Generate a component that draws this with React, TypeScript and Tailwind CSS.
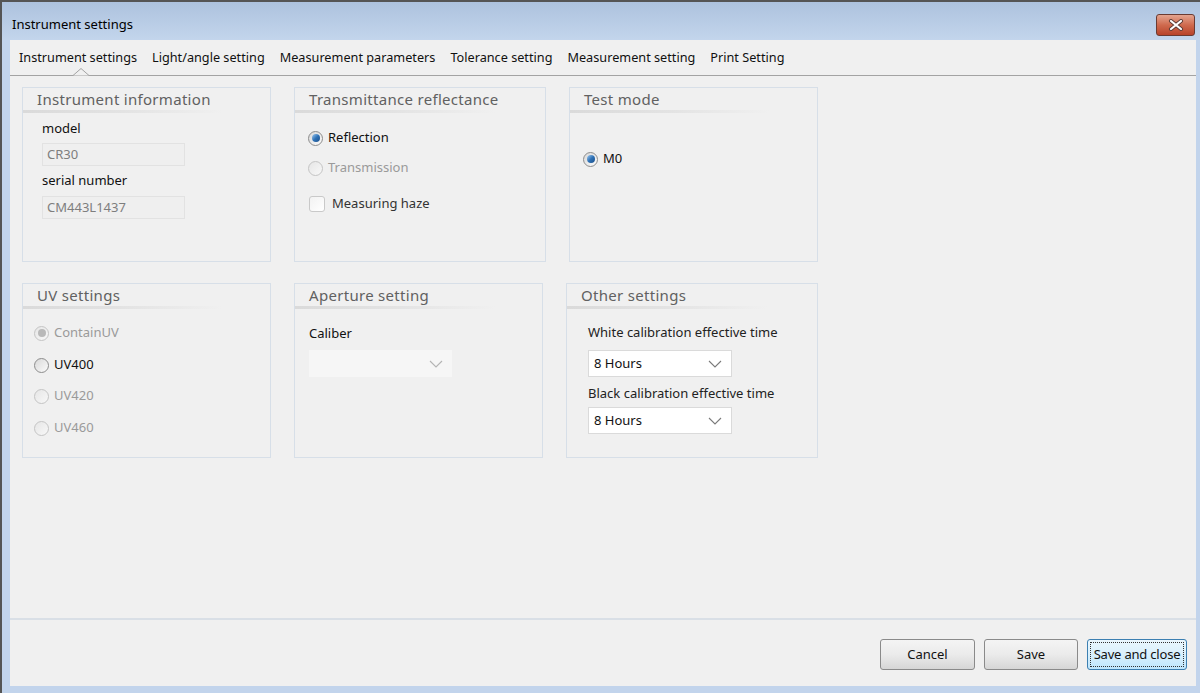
import type { ReactNode } from 'react'

const font = { fontFamily: '"Noto Sans", "Liberation Sans", sans-serif' }

function GroupBox({ title, className = '', children }: { title: string; className?: string; children?: ReactNode }) {
  return (
    <div className={`border border-[#d7dfe8] h-[175px] flex flex-col ${className}`}>
      <div className="h-[22px] flex items-center pl-[14px] text-[15px] text-[#616161] tracking-[0.3px]">{title}</div>
      <div className="h-[3px] w-[200px] bg-gradient-to-r from-[#dadada] via-[#e3e3e3] to-transparent" />
      {children}
    </div>
  )
}

function Radio({ label, checked = false, disabled = false, className = '' }: { label: string; checked?: boolean; disabled?: boolean; className?: string }) {
  return (
    <div className={`h-[20px] flex items-center gap-[5px] ${className}`}>
      <span
        className={`w-[15px] h-[15px] rounded-full border flex items-center justify-center ${
          disabled ? 'border-[#c4c4c4] bg-gradient-to-br from-[#e6e6e6] to-[#f8f8f8]' : 'border-[#8c8c8c] bg-gradient-to-br from-[#d9d9d9] to-[#fbfbfb]'
        }`}
      >
        {checked && (
          <span
            className={`w-[8px] h-[8px] rounded-full ${
              disabled ? 'bg-[#b9b9b9]' : 'bg-gradient-to-br from-[#9ccaf0] via-[#2f72b6] to-[#1b4f8a]'
            }`}
          />
        )}
      </span>
      <span className={`text-[13px] ${disabled ? 'text-[#9a9a9a]' : 'text-[#111]'}`}>{label}</span>
    </div>
  )
}

function Chevron({ color = '#8a8a8a' }: { color?: string }) {
  return (
    <svg width="14" height="8" viewBox="0 0 14 8" fill="none">
      <path d="M1 1 L7 7 L13 1" stroke={color} strokeWidth="1.1" />
    </svg>
  )
}

function Select({ value, disabled = false, className = '' }: { value?: string; disabled?: boolean; className?: string }) {
  return (
    <div
      className={`flex items-center justify-between pl-[5px] pr-[9px] text-[13px] text-[#111] ${
        disabled ? 'bg-[#f6f6f6]' : 'bg-white border border-[#dadada]'
      } ${className}`}
    >
      <span>{value}</span>
      <Chevron color={disabled ? '#b4b4b4' : '#7a7a7a'} />
    </div>
  )
}

function Button({ label, focused = false, className = '' }: { label: string; focused?: boolean; className?: string }) {
  return (
    <button
      className={`h-[31px] rounded-[3px] border text-[13px] text-[#111] ${
        focused
          ? 'border-[#3c7fb1] bg-gradient-to-b from-[#eaf6fd] via-[#d9f0fc] to-[#bee6fd] p-[2px]'
          : 'border-[#8a8a8a] bg-gradient-to-b from-[#f4f4f4] via-[#ebebeb] to-[#d6d6d6]'
      } ${className}`}
    >
      {focused ? (
        <span className="w-full h-full flex items-center justify-center border border-dotted border-[#333] whitespace-nowrap tracking-[-0.2px]">{label}</span>
      ) : (
        label
      )}
    </button>
  )
}

export default function App() {
  const tabs = ['Instrument settings', 'Light/angle setting', 'Measurement parameters', 'Tolerance setting', 'Measurement setting', 'Print Setting']

  return (
    <div style={font} className="w-[1200px] h-[693px] bg-[#c2d4ec] flex flex-col overflow-hidden border-l-2 border-t-2 border-[#555]">
      {/* TITLE BAR */}
      <div className="h-[38px] bg-gradient-to-b from-[#adc2de] to-[#c3d5ec] flex items-start justify-between pl-[10px] pr-[5px] pt-[12px] shrink-0">
        <span className="text-[13px] leading-[20px] text-black">Instrument settings</span>
        <div className="w-[39px] h-[22px] rounded-[3px] border border-[#6b3b32] bg-gradient-to-b from-[#e3a48f] via-[#cf6a4e] to-[#b8432a] flex items-center justify-center">
          <svg width="16" height="12" viewBox="0 0 16 12">
            <path d="M3 2 L13 10 M13 2 L3 10" stroke="#5a3a35" strokeWidth="4" strokeLinecap="round" />
            <path d="M3 2 L13 10 M13 2 L3 10" stroke="#fff" strokeWidth="2.2" strokeLinecap="round" />
          </svg>
        </div>
      </div>

      {/* CLIENT */}
      <div className="flex-1 ml-[8px] mr-[4px] mb-[7px] bg-[#f0f0f0] flex flex-col">
        {/* TABS */}
        <div className="h-[35px] flex items-center gap-[15px] pl-[9px] pt-[1px] text-[12.7px] text-[#111] shrink-0">
          {tabs.map(t => (
            <span key={t}>{t}</span>
          ))}
        </div>
        <div className="relative h-[1px] bg-[#a3a3a3] shrink-0">
          <svg className="absolute left-[63px] top-[-7px]" width="16" height="9" viewBox="0 0 16 9">
            <path d="M0 7.5 L8 0.5 L16 7.5" fill="#f0f0f0" stroke="#a3a3a3" strokeWidth="1" />
          </svg>
        </div>

        {/* GROUPS */}
        <div className="flex-1 pt-[11px] pl-[12px]">
          <div className="grid grid-cols-[249px_252px_249px] gap-x-[23px] gap-y-[21px]">
            <GroupBox title="Instrument information">
              <div className="pl-[19px] flex flex-col">
                <div className="h-[20px] mt-[6px] flex items-center text-[13px] text-[#111]">model</div>
                <div className="h-[23px] mt-[4px] w-[143px] border border-[#e2e2e2] bg-[#efefef] flex items-center pl-[4px] text-[13px] text-[#7e7e7e]">CR30</div>
                <div className="h-[20px] mt-[5px] flex items-center text-[13px] text-[#111]">serial number</div>
                <div className="h-[23px] mt-[5px] w-[143px] border border-[#e2e2e2] bg-[#efefef] flex items-center pl-[4px] text-[13px] text-[#7e7e7e]">CM443L1437</div>
              </div>
            </GroupBox>

            <GroupBox title="Transmittance reflectance">
              <div className="pl-[13px] flex flex-col">
                <Radio label="Reflection" checked className="mt-[15px]" />
                <Radio label="Transmission" disabled className="mt-[10px]" />
                <div className="h-[20px] mt-[16px] flex items-center gap-[7px] pl-[1px]">
                  <span className="w-[16px] h-[16px] rounded-[3px] border border-[#c9c9c9] bg-gradient-to-br from-[#f2f2f2] to-white" />
                  <span className="text-[13px] text-[#333]">Measuring haze</span>
                </div>
              </div>
            </GroupBox>

            <GroupBox title="Test mode">
              <div className="pl-[13px] flex flex-col">
                <Radio label="M0" checked className="mt-[36px]" />
              </div>
            </GroupBox>

            <GroupBox title="UV settings">
              <div className="pl-[11px] flex flex-col">
                <Radio label="ContainUV" checked disabled className="mt-[14px]" />
                <Radio label="UV400" className="mt-[12px]" />
                <Radio label="UV420" disabled className="mt-[11px]" />
                <Radio label="UV460" disabled className="mt-[12px]" />
              </div>
            </GroupBox>

            <GroupBox title="Aperture setting" className="w-[249px]">
              <div className="pl-[14px] flex flex-col">
                <div className="h-[20px] mt-[15px] flex items-center text-[13px] text-[#111]">Caliber</div>
                <Select disabled className="h-[27px] w-[143px] mt-[6px]" />
              </div>
            </GroupBox>

            <GroupBox title="Other settings" className="ml-[-3px]">
              <div className="pl-[21px] flex flex-col">
                <div className="h-[20px] mt-[14px] flex items-center text-[13px] text-[#222]">White calibration effective time</div>
                <Select value="8 Hours" className="h-[27px] w-[144px] mt-[7px]" />
                <div className="h-[20px] mt-[7px] flex items-center text-[13px] text-[#222]">Black calibration effective time</div>
                <Select value="8 Hours" className="h-[27px] w-[144px] mt-[3px]" />
              </div>
            </GroupBox>
          </div>
        </div>

        {/* FOOTER */}
        <div className="h-[68px] border-t-2 border-[#d9dfe6] flex items-start justify-end gap-[9px] pt-[19px] pr-[9px] shrink-0">
          <Button label="Cancel" className="w-[95px]" />
          <Button label="Save" className="w-[94px]" />
          <Button label="Save and close" focused className="w-[100px]" />
        </div>
      </div>
    </div>
  )
}
